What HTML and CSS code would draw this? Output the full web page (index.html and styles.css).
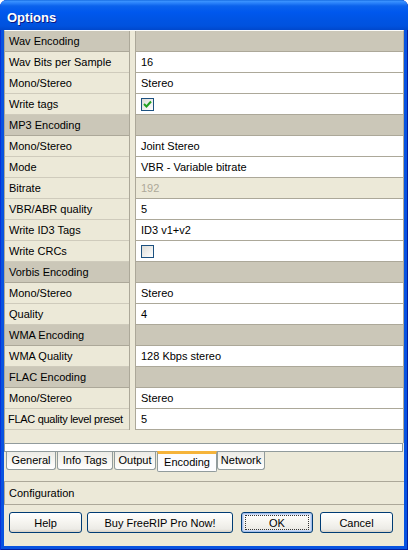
FILE: index.html
```html
<!DOCTYPE html>
<html>
<head>
<meta charset="utf-8">
<link rel="stylesheet" href="styles.css">
</head>
<body>
<div class="window">
  <div class="titlebar"><span class="title">Options</span></div>
  <div class="client">
    <div class="grid">
      <div class="row cat"><div class="lbl">Wav Encoding</div><div class="gut"></div><div class="val"></div></div>
      <div class="row"><div class="lbl">Wav Bits per Sample</div><div class="gut"></div><div class="val">16</div></div>
      <div class="row"><div class="lbl">Mono/Stereo</div><div class="gut"></div><div class="val">Stereo</div></div>
      <div class="row"><div class="lbl">Write tags</div><div class="gut"></div><div class="val"><span class="chk"><svg width="11" height="11" viewBox="0 0 11 11"><path d="M2 5 L4.5 7.5 L9 2.5" fill="none" stroke="#21A121" stroke-width="2"/></svg></span></div></div>
      <div class="row cat"><div class="lbl">MP3 Encoding</div><div class="gut"></div><div class="val"></div></div>
      <div class="row"><div class="lbl">Mono/Stereo</div><div class="gut"></div><div class="val">Joint Stereo</div></div>
      <div class="row"><div class="lbl">Mode</div><div class="gut"></div><div class="val">VBR - Variable bitrate</div></div>
      <div class="row dis"><div class="lbl">Bitrate</div><div class="gut"></div><div class="val">192</div></div>
      <div class="row"><div class="lbl">VBR/ABR quality</div><div class="gut"></div><div class="val">5</div></div>
      <div class="row"><div class="lbl">Write ID3 Tags</div><div class="gut"></div><div class="val">ID3 v1+v2</div></div>
      <div class="row"><div class="lbl">Write CRCs</div><div class="gut"></div><div class="val"><span class="chk"></span></div></div>
      <div class="row cat"><div class="lbl">Vorbis Encoding</div><div class="gut"></div><div class="val"></div></div>
      <div class="row"><div class="lbl">Mono/Stereo</div><div class="gut"></div><div class="val">Stereo</div></div>
      <div class="row"><div class="lbl">Quality</div><div class="gut"></div><div class="val">4</div></div>
      <div class="row cat"><div class="lbl">WMA Encoding</div><div class="gut"></div><div class="val"></div></div>
      <div class="row"><div class="lbl">WMA Quality</div><div class="gut"></div><div class="val">128 Kbps stereo</div></div>
      <div class="row cat"><div class="lbl">FLAC Encoding</div><div class="gut"></div><div class="val"></div></div>
      <div class="row"><div class="lbl">Mono/Stereo</div><div class="gut"></div><div class="val">Stereo</div></div>
      <div class="row"><div class="lbl tight">FLAC quality level preset</div><div class="gut"></div><div class="val">5</div></div>
      <div class="grid-fill"></div>
    </div>
    <div class="tabpage"></div>
    <div class="tabstrip">
      <div class="tab t-general">General</div>
      <div class="tab t-info">Info Tags</div>
      <div class="tab t-output">Output</div>
      <div class="tab sel t-enc">Encoding</div>
      <div class="tab t-net">Network</div>
    </div>
    <div class="status">Configuration</div>
    <div class="buttons">
      <div class="btn b-help">Help</div>
      <div class="btn b-buy">Buy FreeRIP Pro Now!</div>
      <div class="btn b-ok"><span class="focus">OK</span></div>
      <div class="btn b-cancel">Cancel</div>
    </div>
  </div>
</div>
</body>
</html>
```
FILE: styles.css
```css
html, body { margin: 0; padding: 0; background: #ffffff; }
body { font-family: "Liberation Sans", Arial, sans-serif; font-size: 11px; color: #000; }
.window {
  width: 408px; height: 550px; box-sizing: border-box;
  background: #0853E0;
  border-radius: 7px 7px 0 0;
  overflow: hidden;
  display: flex; flex-direction: column;
  box-shadow: inset 1px 0 #0831D9, inset -1px 0 #001EA0, inset 0 -1px #001EA0;
}
.titlebar {
  height: 30px; flex: none;
  background: linear-gradient(to bottom, #0A5FD9 0, #3D95FF 1px, #2A82FA 3px, #0B62EC 6px, #0058EE 12px, #0054E3 20px, #0052DE 26px, #0048CC 30px);
  display: flex; align-items: center;
}
.title {
  color: #fff; font-weight: bold; font-size: 13px; margin-left: 7px; margin-top: 4px;
  text-shadow: 1px 1px #0A1883;
}
.client {
  margin: 0 4px; height: 516px; flex: none;
  background: #ECE9D8;
  display: flex; flex-direction: column;
}
.grid {
  border-top: 1px solid #FBFBF8;
  border-left: 1px solid #ACA899;
  border-right: 1px solid #ACA899;
}
.row { display: flex; height: 21px; }
.lbl {
  width: 124px; box-sizing: border-box; padding-left: 4px;
  background: #ECE9D8; border-bottom: 1px solid #CFCBBC;
  line-height: 20px; white-space: nowrap; overflow: hidden;
}
.lbl.tight { letter-spacing: -0.3px; padding-left: 3px; }
.gut {
  width: 7px; box-sizing: border-box;
  border-left: 1px solid #ACA899; border-right: 1px solid #ACA899;
  background: #ECE9D8;
}
.val {
  flex: 1; box-sizing: border-box; padding-left: 5px;
  background: #fff; border-bottom: 1px solid #ACA899;
  line-height: 20px; white-space: nowrap;
  display: flex; align-items: center;
}
.cat .lbl, .cat .val { background: #CBC7B8; }
.cat .lbl { border-bottom-color: #ACA899; }
.dis .val { background: #ECE9D8; color: #ACA899; }
.grid-fill { height: 13px; }
.chk {
  width: 13px; height: 13px; box-sizing: border-box;
  border: 1px solid #1C5180;
  background: linear-gradient(135deg, #DCDCD7, #FFFFFF);
  display: flex; align-items: center; justify-content: center;
}
.tabpage {
  height: 9px; box-sizing: border-box; margin-right: 1px;
  border: 1px solid #919B9C; background: #fff;
}
.tabstrip {
  height: 21px; margin-top: -1px; display: flex; align-items: flex-start;
  padding-left: 2px; position: relative;
}
.tab {
  height: 18px; box-sizing: border-box; margin-top: 1px;
  border: 1px solid #919B9C; border-top: none;
  border-radius: 0 0 3px 3px;
  background: linear-gradient(to top, #FFFFFF, #F4F3EE 60%, #ECEBE6);
  line-height: 16px; text-align: center;
  margin-right: 1px;
}
.t-general { width: 50px; }
.t-info { width: 56px; }
.t-output { width: 42px; margin-right: 1px; }
.t-enc { width: 60px; }
.t-net { width: 48px; }
.tab.sel {
  height: 21px; margin-top: 0; background: #FCFCFE;
  border-top: 3px solid #F5B33A; border-radius: 0 0 2px 2px;
  line-height: 17px; margin-left: 0; margin-right: 0;
  position: relative; z-index: 1;
}
.status {
  margin-top: 9px; height: 24px; box-sizing: border-box;
  border-top: 1px solid #ACA899; border-bottom: 1px solid #ACA899; border-left: 1px solid #ACA899;
  padding-left: 4px; line-height: 22px;
}
.buttons { display: flex; padding-top: 7px; }
.btn {
  height: 21px; box-sizing: border-box;
  border: 1px solid #003C74; border-radius: 3px;
  background: linear-gradient(to bottom, #FFFFFF 0, #F5F4EF 50%, #ECEBE6 85%, #D6D0C5 100%);
  display: flex; align-items: center; justify-content: center;
}
.b-help { width: 73px; margin-left: 5px; }
.b-buy { width: 146px; margin-left: 5px; }
.b-ok { width: 72px; margin-left: 8px; box-shadow: inset 0 0 0 1px #A6C0EC, inset 0 0 0 2px #CDDBF5; }
.b-cancel { width: 73px; margin-left: 7px; }
.focus {
  display: flex; align-items: center; justify-content: center;
  width: 64px; height: 15px; box-sizing: border-box;
  border: 1px dotted #333;
}
```
